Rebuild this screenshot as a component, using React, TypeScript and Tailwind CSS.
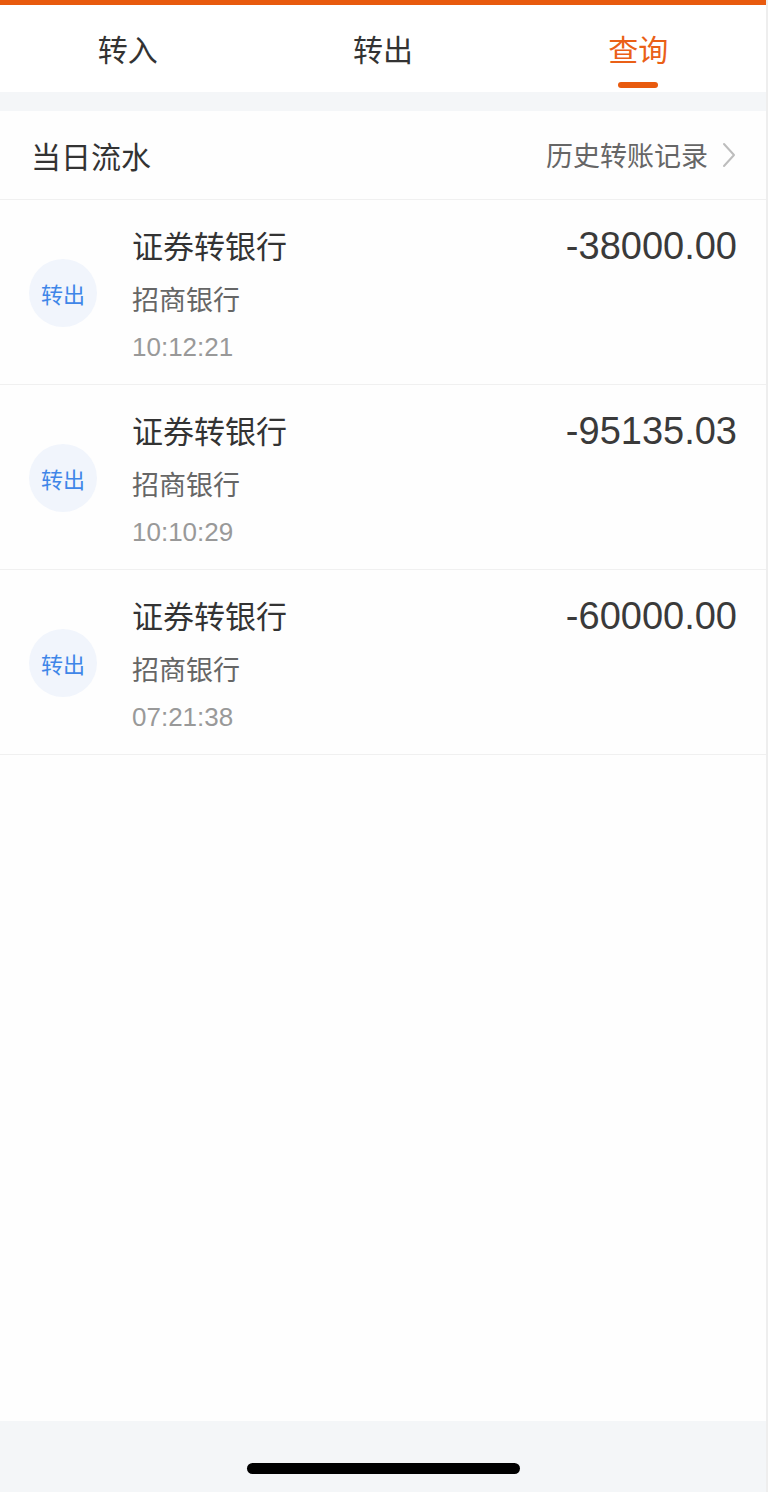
import React from "react";

const rows = [
  { title: "证券转银行", bank: "招商银行", time: "10:12:21", amount: "-38000.00" },
  { title: "证券转银行", bank: "招商银行", time: "10:10:29", amount: "-95135.03" },
  { title: "证券转银行", bank: "招商银行", time: "07:21:38", amount: "-60000.00" },
];

const cjk = "font-['Noto_Sans_CJK_SC','Noto_Sans',sans-serif]";
const num = "font-['Liberation_Sans','Noto_Sans_CJK_SC',sans-serif]";

export default function App() {
  return (
    <div className={`w-[768px] h-[1492px] flex flex-col bg-[#fefefe] border-r-2 border-[#eeeeee] ${cjk}`}>
      <div className="h-[5px] bg-[#e85a0e]" />
      <div className="h-[87px] grid grid-cols-3 bg-white">
        {["转入", "转出", "查询"].map((t, i) => (
          <div key={t} className="relative flex justify-center">
            <span
              className={`mt-[22px] text-[30px] leading-[42px] ${i === 2 ? "text-[#ea6017]" : "text-[#333333]"}`}
            >
              {t}
            </span>
            {i === 2 && (
              <span className="absolute left-1/2 -translate-x-1/2 top-[77px] w-[40px] h-[6px] rounded-full bg-[#e85a0e]" />
            )}
          </div>
        ))}
      </div>
      <div className="h-[19px] bg-[#f4f6f8]" />
      <div className="h-[89px] flex items-center justify-between pl-[31px] pr-[30px] border-b border-[#f0f0f0]">
        <span className="text-[30px] text-[#333333] leading-[40px]">当日流水</span>
        <div className="flex items-center gap-[14px]">
          <span className="text-[27px] text-[#666666] leading-[36px]">历史转账记录</span>
          <svg width="14" height="26" viewBox="0 0 14 26" fill="none">
            <path d="M2 2 L12 13 L2 24" stroke="#bdbdbd" strokeWidth="2" strokeLinecap="round" strokeLinejoin="round" />
          </svg>
        </div>
      </div>
      {rows.map((r, i) => (
        <div key={i} className="h-[185px] flex items-start border-b border-[#f0f0f0] pl-[29px] pr-[29px]">
          <div className="mt-[59px] w-[68px] h-[68px] rounded-full bg-[#f1f5fc] flex items-center justify-center">
            <span className="text-[22px] text-[#3f86e8] leading-none">转出</span>
          </div>
          <div className="ml-[35px] flex flex-col">
            <span className="mt-[24px] text-[31px] leading-[42px] text-[#333333]">{r.title}</span>
            <span className="mt-[15px] text-[27px] leading-[36px] text-[#666666]">{r.bank}</span>
            <span className={`mt-[15px] text-[26px] leading-[30px] text-[#999999] ${num}`}>{r.time}</span>
          </div>
          <div className={`ml-auto mt-[24px] text-[38px] leading-[44px] text-[#3a3a3a] ${num}`}>{r.amount}</div>
        </div>
      ))}
      <div className="flex-1" />
      <div className="h-[71px] bg-[#f4f6f8] flex justify-center">
        <div className="mt-[42px] w-[273px] h-[11px] rounded-full bg-black" />
      </div>
    </div>
  );
}
